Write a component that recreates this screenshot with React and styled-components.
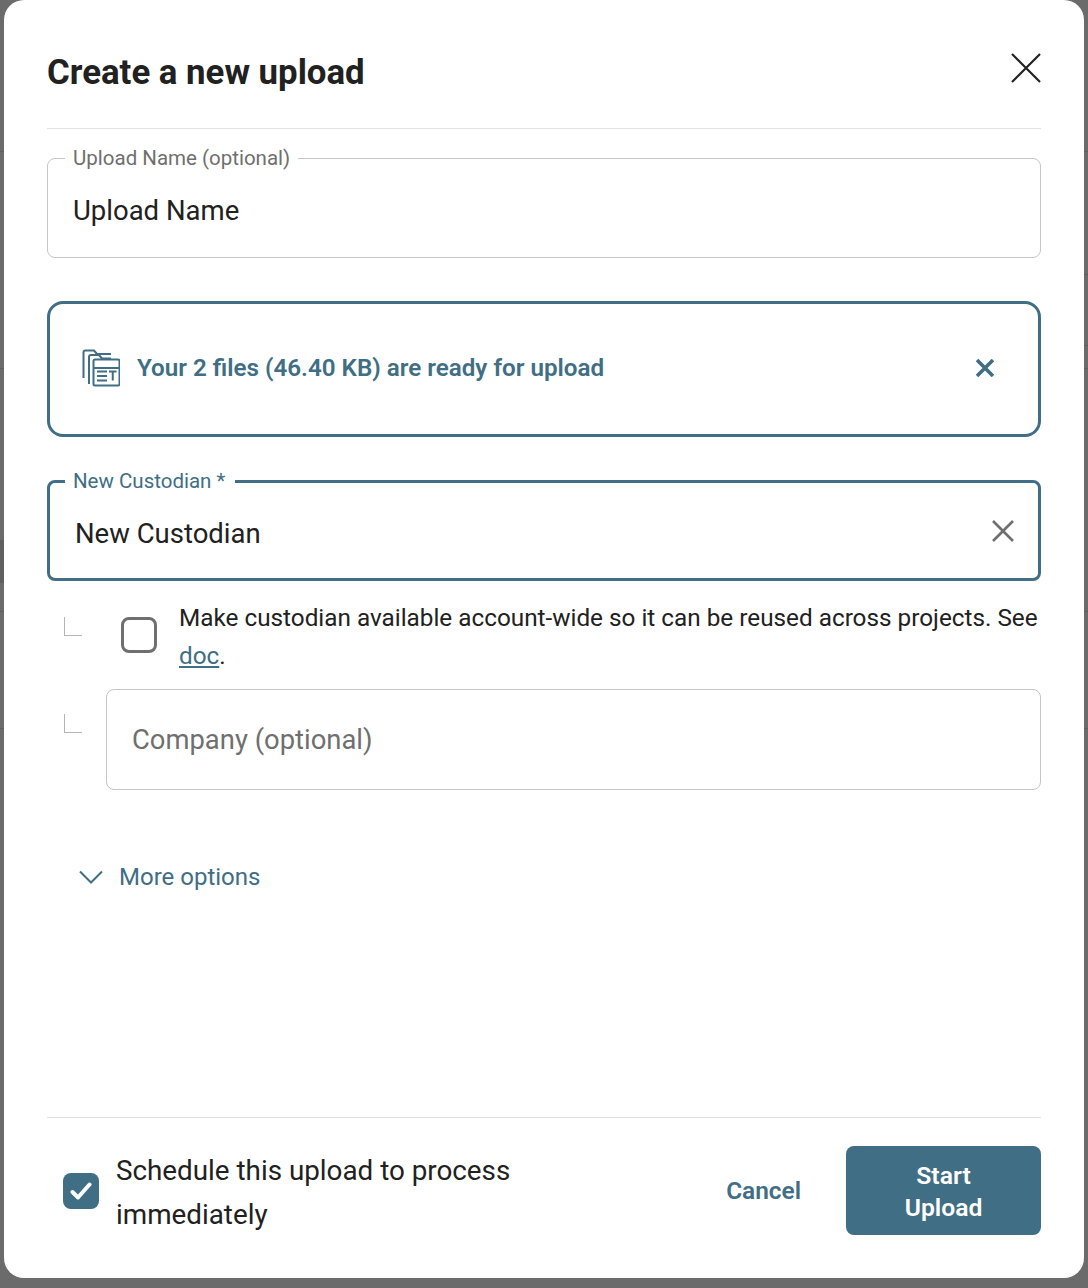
import React from "react";
import styled, { createGlobalStyle } from "styled-components";

const TEAL = "#406e84";
const INK = "#212121";
const GRAY = "#6f6f6f";
const LINE = "#c6c6c6";

const GlobalStyle = createGlobalStyle`
  html, body {
    margin: 0;
    padding: 0;
    background: #6b6b6b;
  }
  * {
    box-sizing: border-box;
  }
`;

// rows of the table that sits behind the dialog, only its edges show
const LEFT_ROWS = [
  { h: 152 },
  { h: 217 },
  { h: 171, plain: true },
  { h: 43, plain: true, dim: true },
  { h: 29 },
  { h: 117 },
];
const RIGHT_ROWS = [{ h: 152 }, { h: 123 }, { h: 71 }, { h: 23 }, { h: 243 }, { h: 117 }];

const Cross = ({ size, weight }) => (
  <svg width={size} height={size} viewBox={`0 0 ${size} ${size}`} fill="none" stroke="currentColor" strokeWidth={weight}>
    <path d={`M1 1L${size - 1} ${size - 1}M${size - 1} 1L1 ${size - 1}`} />
  </svg>
);

const FilesIcon = () => (
  <svg width="38" height="38" viewBox="0 0 38 38" fill="none" stroke={TEAL} strokeWidth="2">
    <path d="M1.500 29V3.500q0-2 2-2h8.500l3 3.500h14" />
    <path d="M7 35V8q0-2 2-2h8l3 3.500h9" />
    <rect x="11.500" y="10.500" width="26" height="26" rx="1.500" />
    <path d="M11.500 19h26" />
    <path d="M15 22.500h10M15 27h10M15 31.500h10M27 22.500h7.500M30.750 22.500v9" />
  </svg>
);

const App = () => {
  return (
    <Backdrop>
      <GlobalStyle />
      <Strip $side="left">
        {LEFT_ROWS.map((row, i) => (
          <StripRow key={i} $h={row.h} $plain={row.plain} $dim={row.dim} />
        ))}
      </Strip>
      <Strip $side="right">
        {RIGHT_ROWS.map((row, i) => (
          <StripRow key={i} $h={row.h} />
        ))}
      </Strip>
      <Modal>
        <Header>
          <Title>Create a new upload</Title>
          <CloseButton aria-label="Close">
            <Cross size={30} weight={2.2} />
          </CloseButton>
        </Header>

        <Field>
          <Legend>Upload Name (optional)</Legend>
          <FieldValue>Upload Name</FieldValue>
        </Field>

        <FilesBox>
          <FilesIcon />
          <FilesText>Your 2 files (46.40 KB) are ready for upload</FilesText>
          <FilesClear>
            <Cross size={18} weight={3.6} />
          </FilesClear>
        </FilesBox>

        <Field $active>
          <Legend $active>New Custodian *</Legend>
          <FieldValue $active>New Custodian</FieldValue>
          <FieldClear>
            <Cross size={22} weight={2.6} />
          </FieldClear>
        </Field>

        <SubRow>
          <Elbow />
          <Checkbox />
          <SubText>
            Make custodian available account-wide so it can be reused across
            projects. See <DocLink href="#">doc</DocLink>.
          </SubText>
        </SubRow>

        <CompanyRow>
          <Elbow $low />
          <CompanyField>Company (optional)</CompanyField>
        </CompanyRow>

        <MoreOptions>
          <svg width="24" height="14" viewBox="0 0 24 14" fill="none" stroke={TEAL} strokeWidth="2">
            <path d="M1 1.500l11 11 11-11" />
          </svg>
          More options
        </MoreOptions>

        <Footer>
          <Schedule>
            <Checkbox $checked>
              <svg width="22" height="18" viewBox="0 0 22 18" fill="none" stroke="#fff" strokeWidth="4" strokeLinecap="round" strokeLinejoin="round">
                <path d="M2.500 10l5.500 5.500L19.500 2.500" />
              </svg>
            </Checkbox>
            <ScheduleText>Schedule this upload to process immediately</ScheduleText>
          </Schedule>
          <Cancel>Cancel</Cancel>
          <StartButton>Start Upload</StartButton>
        </Footer>
      </Modal>
    </Backdrop>
  );
};

const Backdrop = styled.div`
  position: relative;
  width: 1088px;
  height: 1288px;
  overflow: hidden;
  padding-left: 4px;
  background: #6b6b6b;
  font-family: "Roboto", "Liberation Sans", sans-serif;
  color: ${INK};
`;

const Strip = styled.div`
  position: absolute;
  top: 0;
  ${(p) => p.$side}: 0;
  width: 4px;
  display: flex;
  flex-direction: column;
`;

const StripRow = styled.div`
  height: ${(p) => p.$h}px;
  background: ${(p) => (p.$dim ? "#5f5f5f" : "transparent")};
  border-bottom: ${(p) => (p.$plain ? "0" : "1px solid #5e5e5e")};
`;

const Modal = styled.div`
  position: relative;
  width: 1080px;
  height: 1278px;
  padding: 0 43px;
  display: flex;
  flex-direction: column;
  background: #fff;
  border-radius: 20px;
`;

const Header = styled.header`
  height: 129px;
  flex-shrink: 0;
  display: flex;
  align-items: flex-start;
  justify-content: space-between;
  border-bottom: 1px solid #e2e2e2;
`;

const Title = styled.h1`
  margin: 50px 0 0;
  font-size: 34.800px;
  line-height: 44px;
  font-weight: 700;
`;

const CloseButton = styled.button`
  margin: 53px 0 0;
  padding: 0;
  display: flex;
  border: 0;
  background: none;
  color: ${INK};
`;

const Field = styled.fieldset`
  position: relative;
  margin: ${(p) => (p.$active ? "33px" : "18px")} 0 0;
  padding: 0 25px;
  height: 111px;
  flex-shrink: 0;
  border: ${(p) => (p.$active ? `3px solid ${TEAL}` : `1px solid ${LINE}`)};
  border-radius: 8px;
`;

const Legend = styled.legend`
  margin-left: ${(p) => (p.$active ? "-10px" : "-8px")};
  padding: 0 ${(p) => (p.$active ? "10px" : "8px")} 0 8px;
  font-size: 20.500px;
  line-height: 22px;
  color: ${(p) => (p.$active ? TEAL : GRAY)};
`;

const FieldValue = styled.div`
  margin-top: 24px;
  font-size: 27.500px;
  line-height: 36px;
  color: ${INK};
`;

const FieldClear = styled.span`
  position: absolute;
  right: 24px;
  top: 28px;
  display: flex;
  color: ${GRAY};
`;

const FilesBox = styled.div`
  height: 136px;
  margin-top: 43px;
  flex-shrink: 0;
  padding: 0 44px 2px 32px;
  display: flex;
  align-items: center;
  gap: 17px;
  border: 3px solid ${TEAL};
  border-radius: 16px;
  color: ${TEAL};
`;

const FilesText = styled.div`
  flex: 1;
  font-size: 24.200px;
  font-weight: 600;
`;

const FilesClear = styled.span`
  display: flex;
`;

const SubRow = styled.div`
  margin-top: 18px;
  padding-left: 17px;
  display: flex;
  align-items: flex-start;
`;

const Elbow = styled.span`
  width: 18px;
  height: 19px;
  margin-top: ${(p) => (p.$low ? "25px" : "18px")};
  flex-shrink: 0;
  border-left: 1px solid #b5b5b5;
  border-bottom: 1px solid #b5b5b5;
`;

const Checkbox = styled.span`
  width: 36px;
  height: 36px;
  flex-shrink: 0;
  display: flex;
  align-items: center;
  justify-content: center;
  border-radius: 8px;
  background: ${(p) => (p.$checked ? TEAL : "#fff")};
  border: ${(p) => (p.$checked ? "0" : `3px solid ${GRAY}`)};
  ${SubRow} & {
    margin: 18px 22px 0 39px;
  }
`;

const SubText = styled.p`
  margin: 0;
  font-size: 24.300px;
  line-height: 38px;
`;

const DocLink = styled.a`
  color: ${TEAL};
  text-decoration: underline;
`;

const CompanyRow = styled.div`
  margin-top: 14px;
  padding-left: 17px;
  display: flex;
  align-items: flex-start;
  gap: 24px;
`;

const CompanyField = styled.div`
  flex: 1;
  height: 101px;
  padding-left: 25px;
  display: flex;
  align-items: center;
  border: 1px solid ${LINE};
  border-radius: 8px;
  font-size: 27.400px;
  color: ${GRAY};
`;

const MoreOptions = styled.div`
  margin-top: 70px;
  padding-left: 32px;
  display: flex;
  align-items: center;
  gap: 16px;
  font-size: 24px;
  line-height: 34px;
  color: ${TEAL};
`;

const Footer = styled.footer`
  margin-top: auto;
  height: 161px;
  flex-shrink: 0;
  padding-top: 31px;
  display: flex;
  align-items: flex-start;
  border-top: 1px solid #e2e2e2;
`;

const Schedule = styled.div`
  width: 470px;
  margin-left: 16px;
  display: flex;
  align-items: center;
  gap: 17px;
  ${Checkbox} {
    margin-bottom: 4px;
  }
`;

const ScheduleText = styled.div`
  font-size: 27.800px;
  line-height: 44px;
`;

const Cancel = styled.button`
  margin: 23px 0 0 auto;
  padding: 0;
  border: 0;
  background: none;
  font: 600 24.400px/38px "Roboto", sans-serif;
  color: ${TEAL};
`;

const StartButton = styled.button`
  width: 195px;
  height: 89px;
  margin: -3px 0 0 45px;
  padding: 2px 40px 0;
  border: 0;
  border-radius: 8px;
  background: ${TEAL};
  font: 600 24.700px/32px "Roboto", sans-serif;
  color: #fff;
`;

export default App;
